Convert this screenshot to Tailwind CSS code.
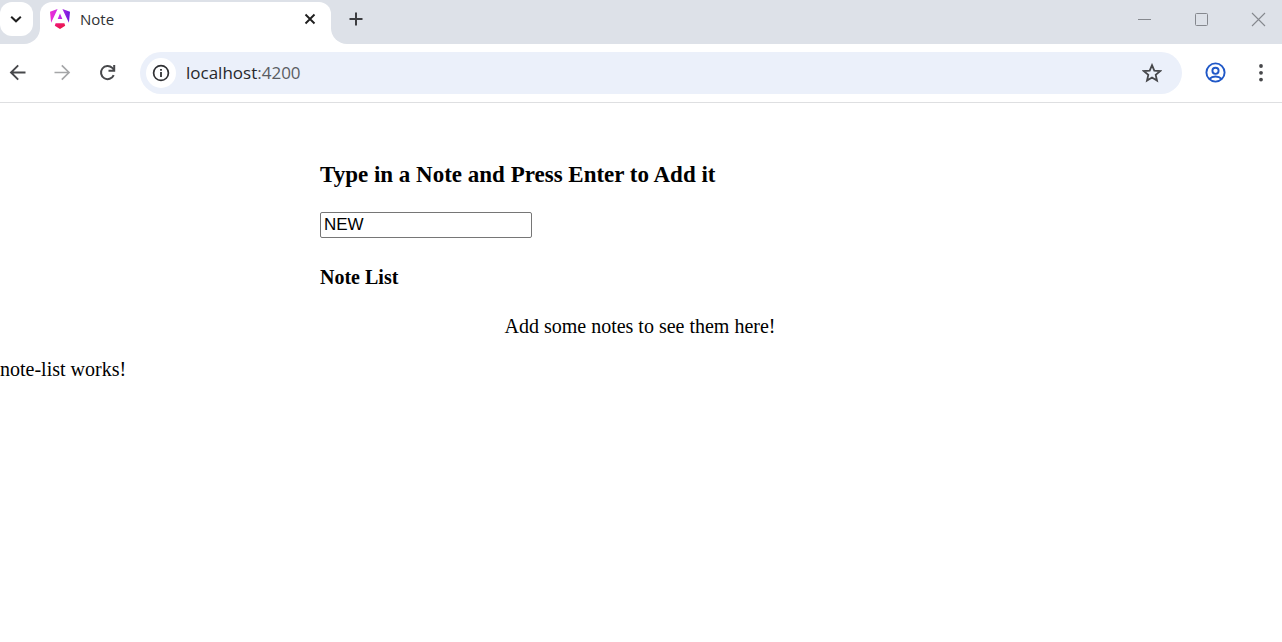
<!DOCTYPE html>
<html lang="en">
<head>
<meta charset="utf-8">
<meta name="viewport" content="width=device-width, initial-scale=1">
<title>Note</title>
<script src="https://cdn.jsdelivr.net/npm/@tailwindcss/browser@4"></script>
</head>
<body class="min-h-screen bg-white text-black font-['Liberation_Serif',serif]">
<header class="border-b border-[#dedfe1] font-['Open_Sans',sans-serif]">
  <!-- Tab strip -->
  <div class="flex h-11 bg-white">
    <div class="w-10 shrink-0 rounded-br-[16px] bg-[#dde1e8] pt-[2px]">
      <button type="button" aria-label="Search tabs" class="flex h-[34px] w-[33px] items-center justify-center rounded-xl bg-white pr-[2px]">
        <svg class="size-3" viewBox="0 0 12 12" fill="none" stroke="#1f1f1f" stroke-width="2"><path d="M1.2 3.7 6 8.3l4.8-4.6"/></svg>
      </button>
    </div>
    <div class="w-[291px] shrink-0 bg-[#dde1e8] pt-[2px]">
      <div class="flex h-[42px] items-start rounded-t-xl bg-white pr-[13px] pl-[10px]">
        <svg class="mt-[6px] h-[22px] w-5 shrink-0" viewBox="0 0 20 22">
          <defs>
            <linearGradient id="sides" x1="0" y1="0" x2="1" y2="0"><stop offset="0" stop-color="#f02bd0"/><stop offset=".45" stop-color="#c92bea"/><stop offset="1" stop-color="#6a18dc"/></linearGradient>
            <linearGradient id="base" x1="0" y1="0" x2="1" y2="1"><stop offset="0" stop-color="#f0157e"/><stop offset="1" stop-color="#e61a3c"/></linearGradient>
          </defs>
          <path fill="url(#sides)" d="M0 3.7 7.6 1 1.1 14.7ZM12.4 1 20 3.7 18.9 14.7ZM7.7 11 10 5.6 12.3 11Z"/>
          <path fill="url(#base)" d="M5.6 15.2h8.8l.8 2.6L10 21l-5.2-3.2Z"/>
        </svg>
        <span class="ml-[10px] pt-[5px] text-[15px] leading-6 text-[#303134]">Note</span>
        <button type="button" aria-label="Close tab" class="mt-[9px] ml-auto flex size-4 items-center justify-center">
          <svg class="size-4" viewBox="0 0 16 16" fill="none" stroke="#1f1f1f" stroke-width="1.9"><path d="m3.5 3.5 9 9m0-9-9 9"/></svg>
        </button>
      </div>
    </div>
    <div class="flex flex-1 items-start rounded-bl-[16px] bg-[#dde1e8] pt-[11px] pl-[17px]">
      <button type="button" aria-label="New tab"><svg class="size-4" viewBox="0 0 16 16" fill="none" stroke="#3c3d40" stroke-width="2"><path d="M8 1.500v13M1.500 8h13"/></svg></button>
      <div class="ml-auto flex gap-[41px] pr-4">
        <button type="button" aria-label="Minimize"><svg class="size-4" viewBox="0 0 16 16" fill="none" stroke="#85888e"><path d="M2 8.500h13"/></svg></button>
        <button type="button" aria-label="Maximize"><svg class="size-4" viewBox="0 0 16 16" fill="none" stroke="#85888e"><rect x="2.500" y="2.500" width="12" height="12" rx="1"/></svg></button>
        <button type="button" aria-label="Close window"><svg class="size-4" viewBox="0 0 16 16" fill="none" stroke="#85888e" stroke-width="1.100"><path d="m2 2 13 13m0-13L2 15"/></svg></button>
      </div>
    </div>
  </div>
  <!-- Toolbar -->
  <div class="flex h-[58px] items-center pl-2">
    <button type="button" aria-label="Back"><svg class="size-5" viewBox="0 0 20 20" fill="none" stroke="#47484b" stroke-width="1.900"><path d="M17.500 9.500H3M10.200 2.300 3 9.500l7.200 7.200"/></svg></button>
    <button type="button" aria-label="Forward" class="ml-6"><svg class="size-5" viewBox="0 0 20 20" fill="none" stroke="#a5a6a8" stroke-width="1.700"><path d="M2.500 9.500H17M9.800 2.300 17 9.500l-7.200 7.200"/></svg></button>
    <button type="button" aria-label="Reload" class="ml-[26px]"><svg class="size-5" viewBox="0 0 20 20" fill="none" stroke="#47484b" stroke-width="2"><path d="M15.700 12.100A6.600 6.600 0 1 1 14.300 4.900L16.200 7"/><path d="M16.200 2v5.700h-5.700"/></svg></button>
    <div class="ml-[22px] flex h-[42px] flex-1 items-center rounded-full bg-[#ebf0fa] pr-5 pl-[6px]">
      <button type="button" aria-label="Site information" class="flex size-[30px] items-center justify-center rounded-full bg-white">
        <svg class="size-[18px]" viewBox="0 0 18 18"><circle cx="9" cy="9" r="7.400" fill="none" stroke="#303134" stroke-width="1.700"/><path fill="#303134" d="M8.100 7.900h1.800v5H8.100zM8.100 5h1.800v1.700H8.100z"/></svg>
      </button>
      <a href="http://localhost:4200" class="ml-[10px] text-[17px] leading-6 text-[#27282b]">localhost<span class="text-[#5a5d63]">:4200</span></a>
      <button type="button" aria-label="Bookmark" class="ml-auto"><svg class="size-5" viewBox="0 0 20 20" fill="none" stroke="#47484b" stroke-width="1.800"><path d="m10 2.200 2.300 5.400 5.800.5-4.400 3.800 1.300 5.700-5-3.100-5 3.100 1.300-5.700-4.400-3.800 5.800-.5Z"/></svg></button>
    </div>
    <button type="button" aria-label="Profile" class="ml-[23px]"><svg class="size-[22px]" viewBox="0 0 22 22" fill="none" stroke="#2058c7" stroke-width="1.900"><circle cx="10.500" cy="10.500" r="9.100"/><circle cx="10.500" cy="8.800" r="3.100"/><path d="M4.300 17c1.700-1.700 3.800-2.500 6.200-2.500s4.500.8 6.200 2.500"/></svg></button>
    <button type="button" aria-label="Menu" class="mr-[11px] ml-6"><svg class="size-5" viewBox="0 0 20 20" fill="#47484b"><circle cx="10" cy="3" r="1.900"/><circle cx="10" cy="9.800" r="1.900"/><circle cx="10" cy="16.600" r="1.900"/></svg></button>
  </div>
</header>
<main class="pt-[58px] pr-[2px]">
  <section class="mx-auto w-1/2">
    <h3 class="text-[23px] leading-7 font-bold"><label for="note">Type in a Note and Press Enter to Add it</label></h3>
    <input id="note" type="text" value="NEW" class="mt-[23px] block h-[26px] w-[212px] rounded-[2px] border border-[#767676] bg-white px-[3px] font-['Liberation_Sans',sans-serif] text-[17px]">
    <h4 class="mt-[27px] text-[20px] leading-6 font-bold">Note List</h4>
    <p class="mt-[25px] text-center text-[20px] leading-6">Add some notes to see them here!</p>
  </section>
  <p class="mt-[19px] text-[20px] leading-6">note-list works!</p>
</main>
</body>
</html>
